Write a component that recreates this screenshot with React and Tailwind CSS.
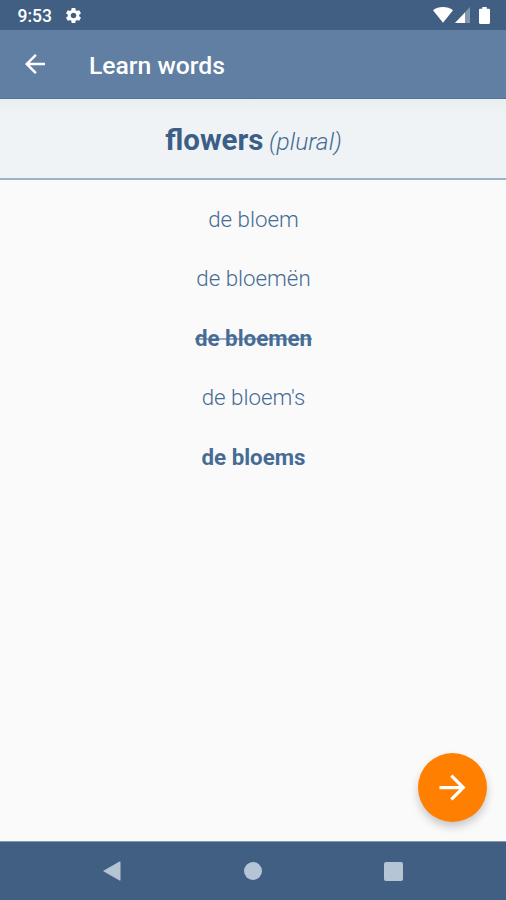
import React from 'react';
import { MdSettings, MdArrowBack, MdArrowForward } from 'react-icons/md';

const answers = [
  { text: 'de bloem', className: 'font-light' },
  { text: 'de bloemën', className: 'font-light' },
  { text: 'de bloemen', className: 'font-bold line-through decoration-[#466c96]/55 decoration-2' },
  { text: "de bloem's", className: 'font-light' },
  { text: 'de bloems', className: 'font-bold' },
];

const StatusBar = () => (
  <div className="flex h-[30px] shrink-0 items-center bg-[#405f82] pl-[17.5px] pr-[16px] pt-[2px] text-white">
    <span className="pt-[1px] text-[17.5px] leading-none font-medium">9:53</span>
    <MdSettings className="mb-[1px] ml-[12.5px]" size={19} />
    <div className="mb-[2px] ml-auto flex items-center">
      <svg width="20" height="16" viewBox="0 0 20 16" fill="currentColor">
        <path d="M0 3.2C2.8 1 6.2 0 10 0s7.2 1 10 3.2L10 15.7z" />
      </svg>
      <svg className="ml-[2px]" width="16" height="16" viewBox="0 0 16 16" fill="currentColor">
        <path d="M0 16L15 0v16z" opacity="0.35" />
        <path d="M0 16L10 5.5V16z" />
      </svg>
      <svg className="ml-[8px]" width="11" height="17" viewBox="0 0 11 17" fill="currentColor">
        <path d="M3.3 0h4.4v1.7h2.1c.7 0 1.2.5 1.2 1.2v12.9c0 .7-.5 1.2-1.2 1.2H1.2C.5 17 0 16.5 0 15.8V2.9c0-.7.5-1.2 1.2-1.2h2.1z" />
      </svg>
    </div>
  </div>
);

const NavigationBar = () => (
  <nav className="flex h-[59px] shrink-0 items-center justify-between border-t border-[#8499ae] bg-[#405f82] px-[103px] text-[#b6c5d5]">
    <svg width="18" height="20" viewBox="0 0 18 20" fill="currentColor">
      <path d="M0 10L16.5.5q1-.4 1 .6v17.8q0 1-1 .6z" />
    </svg>
    <span className="h-[18px] w-[18px] rounded-full bg-[#b6c5d5]" />
    <span className="h-[19px] w-[19px] rounded-[2px] bg-[#b6c5d5]" />
  </nav>
);

const App = () => {
  return (
    <div className="flex h-[900px] w-[506px] flex-col overflow-hidden bg-[#fafafa] font-['Roboto',sans-serif]">
      <StatusBar />

      <header className="flex h-[69px] shrink-0 items-center border-b border-[#50749b] bg-[#607fa2] pl-[20px] text-white">
        <MdArrowBack size={30} />
        <h1 className="ml-[39px] pt-[5px] text-[24.7px] leading-none font-medium">Learn words</h1>
      </header>

      <div className="flex h-[81px] shrink-0 items-baseline justify-center border-b-2 border-[#9eb2c8] bg-linear-to-b from-[#ebeeef] to-[#f0f3f5] to-20% pt-[22px]">
        <p className="pl-[1px] leading-[38px]">
          <span className="text-[29.5px] font-bold text-[#3c5f87]">flowers</span>
          <span className="ml-[5.5px] text-[24.6px] font-light text-[#466c96] italic">(plural)</span>
        </p>
      </div>

      <main className="flex grow flex-col pt-[10px]">
        <ul className="pl-[1px] text-center text-[22.3px] text-[#466c96]">
          {answers.map((answer) => (
            <li key={answer.text} className="h-[59.4px] leading-[59.4px]">
              <span className={answer.className}>{answer.text}</span>
            </li>
          ))}
        </ul>
        <button className="mt-auto mr-[19px] mb-[19px] flex h-[69px] w-[69px] items-center justify-center self-end rounded-full bg-[#ff8000] text-white shadow-[0_5px_9px_rgba(0,0,0,0.2)]">
          <MdArrowForward size={39} />
        </button>
      </main>

      <NavigationBar />
    </div>
  );
};

export default App;
